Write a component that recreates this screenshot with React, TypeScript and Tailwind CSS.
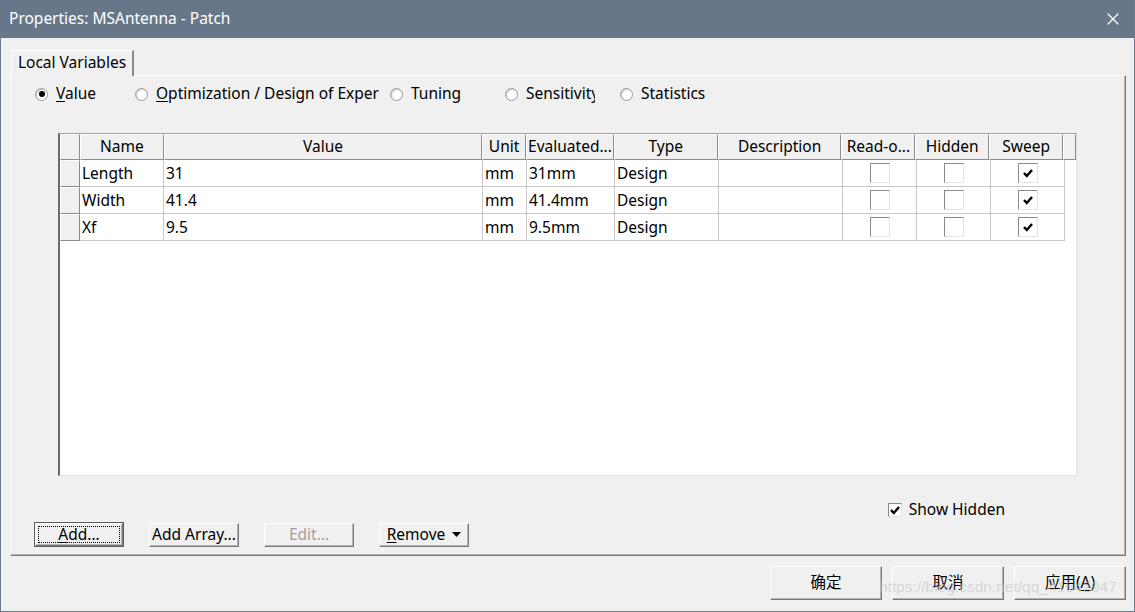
import { X } from 'lucide-react';

const font = { fontFamily: '"Noto Sans", "Noto Sans CJK SC", sans-serif' };

type Col = { label: string; w: string; kind?: 'check' };

const cols: Col[] = [
    { label: 'Name', w: 'w-[84px]' },
    { label: 'Value', w: 'w-[319px]' },
    { label: 'Unit', w: 'w-[44px]' },
    { label: 'Evaluated...', w: 'w-[88px]' },
    { label: 'Type', w: 'w-[104px]' },
    { label: 'Description', w: 'w-[124px]' },
    { label: 'Read-o...', w: 'w-[74px]', kind: 'check' },
    { label: 'Hidden', w: 'w-[74px]', kind: 'check' },
    { label: 'Sweep', w: 'w-[74px]', kind: 'check' },
];

const rows = [
    ['Length', '31', 'mm', '31mm', 'Design', '', false, false, true],
    ['Width', '41.4', 'mm', '41.4mm', 'Design', '', false, false, true],
    ['Xf', '9.5', 'mm', '9.5mm', 'Design', '', false, false, true],
];

function CheckBox({ checked, size = 'w-[20px] h-[20px]' }: { checked: boolean; size?: string }) {
    return (
        <div className={`${size} shrink-0 bg-white border border-t-[#8a8a8a] border-l-[#8a8a8a] border-b-[#e3e3e3] border-r-[#e3e3e3] flex items-center justify-center`}>
            {checked && (
                <svg width="10" height="9" viewBox="0 0 10 9">
                    <path d="M1 4 L3.8 7 L9 1" stroke="#000" strokeWidth="2.4" fill="none" />
                </svg>
            )}
        </div>
    );
}

function Radio({ label, on, u, w }: { label: string; on?: boolean; u?: string; w: string }) {
    const rest = u ? label.slice(1) : label;
    return (
        <div className={`flex items-center ${w}`}>
            <div className="w-[13px] h-[13px] shrink-0 rounded-full border border-[#9a9a9a] bg-white flex items-center justify-center shadow-[inset_1px_1px_1px_#c8c8c8]">
                {on && <div className="w-[6px] h-[6px] rounded-full bg-black" />}
            </div>
            <span className="ml-[8px] whitespace-nowrap overflow-hidden">
                {u && <span className="underline underline-offset-2">{u}</span>}
                {rest}
            </span>
        </div>
    );
}

function Button({ children, w, disabled, focused, h = 'h-[24px]' }: { children: React.ReactNode; w: string; disabled?: boolean; focused?: boolean; h?: string }) {
    return (
        <div className={`${w} ${h} shrink-0 ${focused ? 'border border-[#5a5a5a]' : ''}`}>
            <div className="w-full h-full bg-[#f0f0f0] border border-t-white border-l-white border-b-[#7a7a7a] border-r-[#7a7a7a] shadow-[inset_-1px_-1px_0_#b4b4b4] flex items-center justify-center p-[2px]">
                <div className={`w-full h-full flex items-center justify-center whitespace-nowrap ${focused ? 'border border-dotted border-black' : ''} ${disabled ? 'text-[#a0a0a0]' : 'text-black'}`}>
                    {children}
                </div>
            </div>
        </div>
    );
}

const hdrCell = 'h-[26px] bg-[#f0f0f0] border border-t-white border-l-white border-b-[#8c8c8c] border-r-[#8c8c8c] flex items-center justify-center';

export default function App() {
    return (
        <div style={font} className="w-[1135px] h-[612px] bg-[#f0f0f0] border-x border-b border-[#6b7b8f] text-[15.5px] text-black flex flex-col overflow-hidden relative">
            {/* title bar */}
            <div className="h-[38px] bg-[#677789] flex items-center justify-between pl-[9px] pr-[12px] text-white text-[15.5px] -mx-px">
                <span>Properties: MSAntenna - Patch</span>
                <X size={20} strokeWidth={1.5} />
            </div>

            <div className="flex-1 flex flex-col pl-[9px] pr-[8px]">
                {/* tab strip */}
                <div className="mt-[11px] flex">
                    <div className="ml-[1px] w-[123px] h-[26px] pb-[2px] border-t border-l border-t-white border-l-white border-r-2 border-r-[#8c8c8c] rounded-tl-[2px] flex items-center justify-center relative top-px bg-[#f0f0f0] z-10">
                        Local Variables
                    </div>
                </div>

                {/* tab panel */}
                <div className="h-[481px] w-[1116px] border border-t-white border-l-white border-r-[#7a7a7a] border-b-[#7a7a7a] shadow-[inset_-1px_-1px_0_#b4b4b4] flex flex-col">
                    <div className="h-[36px] flex items-center pl-[24px]">
                        <Radio label="Value" u="V" on w="w-[100px]" />
                        <Radio label="Optimization / Design of Exper" u="O" w="w-[255px]" />
                        <Radio label="Tuning" w="w-[115px]" />
                        <Radio label="Sensitivity" w="w-[90px]" />
                        <span className="w-[25px]" />
                        <Radio label="Statistics" w="w-[100px]" />
                    </div>

                    {/* grid */}
                    <div className="mt-[21px] ml-[47px] w-[1019px] h-[343px] bg-white border border-t-[#a0a0a0] border-l-[#6a6a6a] border-b-[#e3e3e3] border-r-[#e3e3e3] border-l-2 flex flex-col">
                        <div className="flex">
                            <div className={`${hdrCell} w-[20px]`} />
                            {cols.map((c) => (
                                <div key={c.label} className={`${hdrCell} ${c.w} whitespace-nowrap overflow-hidden`}>
                                    {c.label}
                                </div>
                            ))}
                            <div className={`${hdrCell} w-[13px]`} />
                        </div>
                        {rows.map((r, i) => (
                            <div key={i} className="flex h-[27px]">
                                <div className="w-[20px] h-full bg-[#f0f0f0] border border-t-white border-l-white border-b-[#8c8c8c] border-r-[#8c8c8c]" />
                                {cols.map((c, j) => (
                                    <div key={c.label} className={`${c.w} h-full border-r border-b border-[#c8c8c8] flex items-center ${c.kind ? 'justify-center' : 'pl-[2px] pt-[1px]'} whitespace-nowrap`}>
                                        {c.kind ? <CheckBox checked={r[j] as boolean} /> : (r[j] as string)}
                                    </div>
                                ))}
                            </div>
                        ))}
                    </div>

                    <div className="h-[20px] flex items-center justify-end pr-[120px] mt-[24px]">
                        <CheckBox checked size="w-[14px] h-[14px]" />
                        <span className="ml-[7px] leading-none">Show Hidden</span>
                    </div>

                    <div className="flex items-center pl-[23px] mt-[2px] gap-[25px]">
                        <Button w="w-[90px]" focused h="h-[25px]">
                            <span><span className="underline underline-offset-2">A</span>dd...</span>
                        </Button>
                        <Button w="w-[90px]">Add Array...</Button>
                        <Button w="w-[90px]" disabled>Edit...</Button>
                        <Button w="w-[90px]">
                            <span className="flex items-center gap-[7px]">
                                <span><span className="underline underline-offset-2">R</span>emove</span>
                                <svg width="9" height="5" viewBox="0 0 9 5"><path d="M0 0 H9 L4.5 5 Z" fill="#000" /></svg>
                            </span>
                        </Button>
                    </div>
                </div>

                {/* dialog buttons */}
                <div className="flex justify-end gap-[10px] mt-[10px]">
                    <Button w="w-[112px]" h="h-[34px]">确定</Button>
                    <Button w="w-[112px]" h="h-[34px]">取消</Button>
                    <Button w="w-[112px]" h="h-[34px]">应用(<span className="underline underline-offset-2">A</span>)</Button>
                </div>
            </div>

            <div className="absolute left-[878px] top-[575px] text-[15.5px] text-[#c4c4c4]/60 pointer-events-none whitespace-nowrap" style={{ fontFamily: '"Liberation Sans", sans-serif' }}>
                https://blog.csdn.net/qq_41542947
            </div>
        </div>
    );
}
